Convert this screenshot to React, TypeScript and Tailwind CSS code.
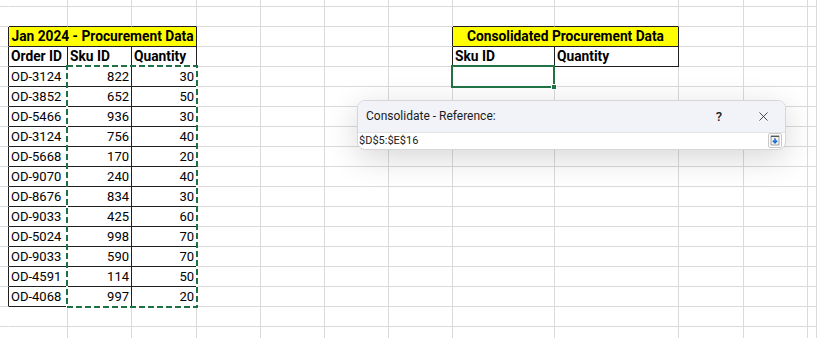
import React from 'react';
import { X } from 'lucide-react';

type Cell = {
    col: number;
    span?: number;
    text?: string;
    bold?: boolean;
    right?: boolean;
    center?: boolean;
    yellow?: boolean;
};

const COLS = 13;
const ROWS = 18;

const orders = [
    ['OD-3124', '822', '30'],
    ['OD-3852', '652', '50'],
    ['OD-5466', '936', '30'],
    ['OD-3124', '756', '40'],
    ['OD-5668', '170', '20'],
    ['OD-9070', '240', '40'],
    ['OD-8676', '834', '30'],
    ['OD-9033', '425', '60'],
    ['OD-5024', '998', '70'],
    ['OD-9033', '590', '70'],
    ['OD-4591', '114', '50'],
    ['OD-4068', '997', '20'],
];

// which cells sit inside one of the two bordered tables
const inTable = (r: number, c: number) =>
    (r >= 2 && r <= 15 && c >= 1 && c <= 3) || (r >= 2 && r <= 3 && c >= 8 && c <= 9);

const rowCells = (r: number): Cell[] => {
    const cells: Cell[] = [];
    for (let c = 0; c < COLS; c++) {
        if (r === 2 && c === 1) {
            cells.push({ col: 1, span: 3, text: 'Jan 2024 - Procurement Data', bold: true, center: true, yellow: true });
            c += 2;
            continue;
        }
        if (r === 2 && c === 8) {
            cells.push({ col: 8, span: 2, text: 'Consolidated Procurement Data', bold: true, center: true, yellow: true });
            c += 1;
            continue;
        }
        if (r === 3 && c >= 1 && c <= 3) {
            cells.push({ col: c, text: ['Order ID', 'Sku ID', 'Quantity'][c - 1], bold: true });
            continue;
        }
        if (r === 3 && (c === 8 || c === 9)) {
            cells.push({ col: c, text: c === 8 ? 'Sku ID' : 'Quantity', bold: true });
            continue;
        }
        if (r >= 4 && r <= 15 && c >= 1 && c <= 3) {
            cells.push({ col: c, text: orders[r - 4][c - 1], right: c > 1 });
            continue;
        }
        cells.push({ col: c });
    }
    return cells;
};

const SheetCell = ({ r, cell }: { r: number; cell: Cell }) => {
    const span = cell.span ?? 1;
    const last = cell.col + span - 1;
    const darkRight = inTable(r, last) || inTable(r, last + 1);
    let darkBottom = false;
    for (let c = cell.col; c <= last; c++) {
        if (inTable(r, c) || inTable(r + 1, c)) darkBottom = true;
    }

    return (
        <div
            className={`flex items-end overflow-hidden whitespace-nowrap border-r border-b px-[2px] pb-[2px] leading-[15px] text-black
                ${darkRight ? 'border-r-[#1f1f1f]' : cell.col === 0 ? 'border-r-white' : 'border-r-[#dadada]'}
                ${darkBottom ? 'border-b-[#1f1f1f]' : 'border-b-[#dadada]'}
                ${cell.yellow ? 'bg-[#ffff00]' : 'bg-white'}
                ${cell.right ? 'justify-end' : cell.center ? 'justify-center' : 'justify-start'}
                ${cell.bold ? 'font-bold text-[13.75px]' : 'text-[13px]'}
                ${span === 3 ? 'col-span-3' : span === 2 ? 'col-span-2' : ''}`}
        >
            {cell.text}
        </div>
    );
};

const CollapseIcon = () => (
    <svg width="14" height="15" viewBox="0 0 14 15">
        <rect x="0.5" y="0.5" width="13" height="14" rx="1.5" fill="#fff" stroke="#c8c8c8" />
        <rect x="3" y="3" width="8" height="9" fill="#f2f2f2" stroke="#8a8a8a" strokeWidth="0.8" />
        <line x1="3" y1="3.4" x2="11" y2="3.4" stroke="#555" strokeWidth="1.2" />
        <path d="M7 5.2 V9.6 M4.9 7.6 L7 9.8 L9.1 7.6" fill="none" stroke="#1f6fd1" strokeWidth="1.6" />
    </svg>
);

const ConsolidateDialog = () => (
    <div className="absolute left-[357px] top-[100px] flex h-[50px] w-[429px] flex-col overflow-hidden rounded-[8px] border border-[#d6d6d6] bg-white shadow-[0_8px_32px_rgba(0,0,0,0.16)]">
        <div className="flex h-[31px] items-center justify-between bg-[#f1f3f8] pl-[8px] pr-[14px]">
            <span className="text-[12px] text-[#1b1b1b]" style={{ fontFamily: 'Roboto, sans-serif' }}>
                Consolidate - Reference:
            </span>
            <div className="flex items-center gap-[34px]">
                <span className="text-[13px] font-medium text-[#222]" style={{ fontFamily: 'Roboto, sans-serif' }}>?</span>
                <X size={15} strokeWidth={1.3} color="#222" />
            </div>
        </div>
        <div className="flex flex-1 items-center justify-between border-t border-[#e2e2e2] pl-[1px] pr-[3px]">
            <span className="text-[11px] text-[#1a1a1a]" style={{ fontFamily: 'Roboto, sans-serif' }}>
                $D$5:$E$16
            </span>
            <CollapseIcon />
        </div>
    </div>
);

const App = () => {
    return (
        <div className="relative h-[338px] w-[817px] overflow-hidden bg-white" style={{ fontFamily: 'Roboto, "Liberation Sans", sans-serif' }}>
            <div className="grid grid-cols-[9px_59px_64px_65px_64px_64px_64px_64px_102px_124px_65px_64px_9px] grid-rows-[7px_repeat(16,20px)_12px]">
                {Array.from({ length: ROWS }).map((_, r) =>
                    rowCells(r).map((cell) => <SheetCell key={`${r}-${cell.col}`} r={r} cell={cell} />)
                )}
            </div>

            {/* copy marquee around the Sku ID / Quantity data */}
            <svg className="absolute left-[66px] top-[65px]" width="132" height="243">
                <rect x="1" y="1" width="130" height="241" fill="none" stroke="#fff" strokeWidth="2" />
                <rect x="1" y="1" width="130" height="241" fill="none" stroke="#1e7145" strokeWidth="2" strokeDasharray="6 3" />
            </svg>

            {/* active cell */}
            <div className="absolute left-[451px] top-[65px] h-[23px] w-[104px] border-2 border-[#217346]">
                <div className="absolute -bottom-[4px] -right-[4px] h-[6px] w-[6px] border border-white bg-[#217346]" />
            </div>

            <ConsolidateDialog />
        </div>
    );
};

export default App;
